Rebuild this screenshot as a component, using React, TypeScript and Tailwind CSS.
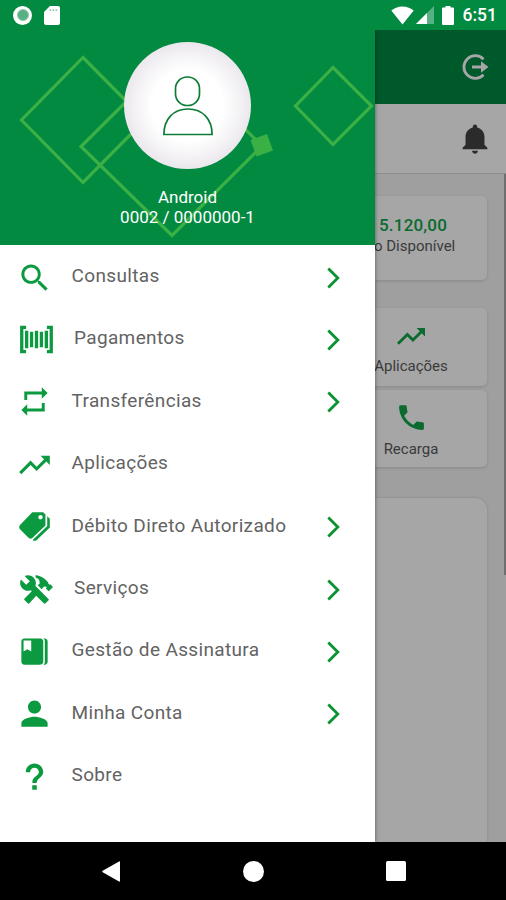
import type { IconType } from "react-icons";
import {
  IoMdBarcode,
  IoMdBookmarks,
  IoMdCall,
  IoMdConstruct,
  IoMdHelp,
  IoMdNotifications,
  IoMdPerson,
  IoMdPricetags,
  IoMdRepeat,
  IoMdSearch,
  IoMdTrendingUp,
} from "react-icons/io";

type MenuItem = {
  label: string;
  icon: IconType;
  wide?: boolean;
  hasChildren?: boolean;
};

const MENU: MenuItem[] = [
  { label: "Consultas", icon: IoMdSearch, hasChildren: true },
  { label: "Pagamentos", icon: IoMdBarcode, wide: true, hasChildren: true },
  { label: "Transferências", icon: IoMdRepeat, hasChildren: true },
  { label: "Aplicações", icon: IoMdTrendingUp },
  { label: "Débito Direto Autorizado", icon: IoMdPricetags, hasChildren: true },
  { label: "Serviços", icon: IoMdConstruct, wide: true, hasChildren: true },
  { label: "Gestão de Assinatura", icon: IoMdBookmarks, hasChildren: true },
  { label: "Minha Conta", icon: IoMdPerson, hasChildren: true },
  { label: "Sobre", icon: IoMdHelp },
];

function StatusBar() {
  return (
    <div className="relative z-20 flex h-[30px] shrink-0 items-center justify-between bg-[#028a41] pr-[9px] pl-[13px]">
      <div className="flex items-center gap-3">
        <div className="flex size-[19px] items-center justify-center rounded-full bg-white">
          <div className="size-[12px] rounded-full border border-[#8fcbaa] bg-[#58b184]" />
        </div>
        <svg width="16" height="19" viewBox="0 0 16 19">
          <path d="M6 0h8a2 2 0 0 1 2 2v15a2 2 0 0 1-2 2H2a2 2 0 0 1-2-2V6z" fill="#fff" />
          <path d="M5.5 3.2h1.6v1.8H5.5zM8.5 3.2h1.6v1.8H8.5zM11.5 3.2h1.6v1.8h-1.6z" fill="#8cc9a8" />
        </svg>
      </div>
      <div className="flex items-center">
        <svg width="23" height="19" viewBox="0 0 23 19">
          <path d="M11.5 18.5 0.3 4.6C3 2 7 0.4 11.5 0.4S20 2 22.7 4.6z" fill="#fff" />
        </svg>
        <svg className="ml-0.5" width="18" height="18" viewBox="0 0 18 18">
          <path d="M18 0v18H0z" fill="#58b184" />
          <path d="M11 7v11H0z" fill="#fff" />
        </svg>
        <svg className="ml-[8px]" width="12" height="19" viewBox="0 0 12 19">
          <path d="M3.5 0h5v1.5H11a1 1 0 0 1 1 1V18a1 1 0 0 1-1 1H1a1 1 0 0 1-1-1V2.5a1 1 0 0 1 1-1h2.5z" fill="#fff" />
        </svg>
        <span className="ml-[9px] text-[17.5px] leading-[19px] font-medium text-white">6:51</span>
      </div>
    </div>
  );
}

function DrawerHeader() {
  return (
    <div className="relative flex h-[215px] shrink-0 flex-col items-center bg-[#028a41] pt-3">
      <svg className="absolute inset-0" width="375" height="215" viewBox="0 30 375 215" fill="none">
        <g stroke="#3bb044" strokeWidth="3.2">
          <path d="M83 57.5 145 120 83 182.5 21.5 120z" />
          <path d="M172 56 262 146 172 235.5 81 146.5z" />
          <path d="M333 67.5 371.5 106 333 144.5 295.5 106z" />
        </g>
        <rect x="253" y="136.5" width="17.5" height="17.5" fill="#3bb044" transform="rotate(-20 261.7 145.2)" />
      </svg>
      <div className="relative flex size-[127px] items-center justify-center rounded-full bg-[radial-gradient(circle,#ffffff_40%,#eae7ec_72%)]">
        <svg width="50" height="60" viewBox="0 0 50 60" fill="none" stroke="#0f7c35" strokeWidth="1.7">
          <rect x="12.5" y="1" width="24" height="28.5" rx="11.7" />
          <path d="M.9 58.500C.9 43.5 10 33 25 33S49.1 43.5 49.1 58.500z" />
        </svg>
      </div>
      <div className="relative mt-[18px] text-center text-[17px] leading-5 text-white">
        <p>Android</p>
        <p>0002 / 0000000-1</p>
      </div>
    </div>
  );
}

function Chevron() {
  return (
    <svg className="mt-[3px] ml-auto" width="13" height="22" viewBox="0 0 13 22" fill="none">
      <path d="M1.3 1.5 10.8 11 1.3 20.5" stroke="#0b9231" strokeWidth="2.8" />
    </svg>
  );
}

function Drawer() {
  return (
    <aside className="z-10 flex w-[375px] shrink-0 flex-col bg-white shadow-[0_0_4px_rgba(0,0,0,0.5)]">
      <DrawerHeader />
      <nav>
        {MENU.map(({ label, icon: Icon, wide, hasChildren }) => (
          <button key={label} type="button" className="flex h-[62.4px] w-full items-center pr-[35px] pl-[17px]">
            <Icon className={wide ? "mt-[2px] ml-[2px] size-[35px] text-[#0b9a3f]" : "mt-[2px] size-[35px] text-[#0b9a3f]"} />
            <span
              className={
                wide
                  ? "ml-[20px] text-[19px] tracking-[0.35px] text-[#636363]"
                  : "ml-[19.5px] text-[19px] tracking-[0.35px] text-[#636363]"
              }
            >
              {label}
            </span>
            {hasChildren && <Chevron />}
          </button>
        ))}
      </nav>
    </aside>
  );
}

function LogOutIcon() {
  return (
    <svg width="28" height="28" viewBox="0 0 28 28" fill="none">
      <path d="M21.5 6.3A11.3 11.3 0 1 0 21.5 21.7" stroke="#a6a6a6" strokeWidth="2.8" />
      <path d="M10 12.6h9V8.2l7.5 5.8-7.5 5.8v-4.4h-9z" fill="#a6a6a6" />
    </svg>
  );
}

function AccountPage() {
  return (
    <main className="flex min-w-0 flex-1 flex-col overflow-hidden bg-[#9f9f9f]">
      <div className="flex h-[74px] shrink-0 items-center justify-end bg-[#00592b] pr-4">
        <LogOutIcon />
      </div>
      <div className="flex h-[70px] shrink-0 items-center justify-end border-b border-[#8e8e8e] bg-[#a6a6a6] pr-[13px]">
        <IoMdNotifications className="size-9 text-[#2b2b2b]" />
      </div>
      <div className="flex min-h-0 flex-1 justify-between">
        <div className="flex w-[112px] flex-col pt-[22px] text-[15px] text-[#3a3a3a]">
          <section className="h-[84px] rounded-r-[5px] bg-[#a6a6a6] pt-[18px] shadow-[0_1px_3px_rgba(0,0,0,0.15)]">
            <p className="pl-1 text-[17px] leading-[22px] font-medium tracking-[0.2px] text-[#0a6a30]">5.120,00</p>
            <p className="-ml-px leading-[20px] whitespace-nowrap">o Disponível</p>
          </section>
          <section className="mt-7 flex h-[78px] flex-col items-center rounded-r-[5px] bg-[#a6a6a6] pt-[12px] pr-10 shadow-[0_1px_3px_rgba(0,0,0,0.15)]">
            <IoMdTrendingUp className="size-8 text-[#0a6a30]" />
            <p className="mt-0.5 leading-[25px]">Aplicações</p>
          </section>
          <section className="mt-1 flex h-[77px] flex-col items-center rounded-r-[5px] bg-[#a6a6a6] pt-[11px] pr-10 shadow-[0_1px_3px_rgba(0,0,0,0.15)]">
            <IoMdCall className="size-[33px] text-[#0a6a30]" />
            <p className="mt-[3px] leading-[25px]">Recarga</p>
          </section>
          <section className="mt-[31px] flex-1 rounded-tr-[12px] bg-[#a6a6a6] shadow-[0_0_3px_rgba(0,0,0,0.15)]" />
        </div>
        <div className="h-[401px] w-[2px] bg-[#6f6f6f]" />
      </div>
    </main>
  );
}

function NavigationBar() {
  return (
    <div className="relative z-20 flex h-[58px] shrink-0 items-center bg-black pl-[102px]">
      <svg width="18" height="21" viewBox="0 0 18 21">
        <path d="M17 .5Q18 0 18 1v19q0 1-1 .5L.7 11.2Q-.3 10.5.7 9.8z" fill="#fff" />
      </svg>
      <div className="ml-[123px] size-[21px] rounded-full bg-white" />
      <div className="ml-[122px] size-[20px] rounded-[1.5px] bg-white" />
    </div>
  );
}

export default function App() {
  return (
    <div className="flex h-[900px] w-[506px] flex-col overflow-hidden font-[Roboto,sans-serif]">
      <StatusBar />
      <div className="flex min-h-0 flex-1">
        <Drawer />
        <AccountPage />
      </div>
      <NavigationBar />
    </div>
  );
}
